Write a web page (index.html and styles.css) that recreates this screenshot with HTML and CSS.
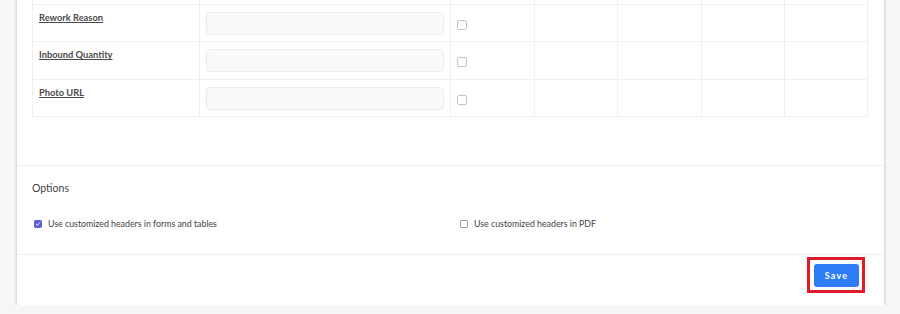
FILE: index.html
```html
<!DOCTYPE html>
<html>
<head>
<meta charset="utf-8">
<link rel="stylesheet" href="styles.css">
</head>
<body>
<div class="card">
  <div class="table-wrap">
    <table class="fields">
      <colgroup>
        <col class="c-name"><col class="c-input"><col class="c-check">
        <col class="c-rest"><col class="c-rest"><col class="c-rest"><col class="c-rest">
      </colgroup>
      <tr class="row prev">
        <td></td><td></td><td></td><td></td><td></td><td></td><td></td>
      </tr>
      <tr class="row">
        <td><a class="fname">Rework Reason</a></td>
        <td><div class="inp"></div></td>
        <td><span class="cb"></span></td>
        <td></td><td></td><td></td><td></td>
      </tr>
      <tr class="row">
        <td><a class="fname">Inbound Quantity</a></td>
        <td><div class="inp"></div></td>
        <td><span class="cb"></span></td>
        <td></td><td></td><td></td><td></td>
      </tr>
      <tr class="row">
        <td><a class="fname">Photo URL</a></td>
        <td><div class="inp"></div></td>
        <td><span class="cb"></span></td>
        <td></td><td></td><td></td><td></td>
      </tr>
    </table>
  </div>
  <div class="options">
    <div class="opt-title">Options</div>
    <div class="opt-row">
      <label class="opt">
        <span class="ocb checked"><svg viewBox="0 0 8 8" width="8" height="8"><path d="M1.6 4.2 L3.3 5.8 L6.4 2.3" fill="none" stroke="#fff" stroke-width="1.2" stroke-linecap="round" stroke-linejoin="round"/></svg></span>
        <span>Use customized headers in forms and tables</span>
      </label>
      <label class="opt">
        <span class="ocb"></span>
        <span>Use customized headers in PDF</span>
      </label>
    </div>
  </div>
  <div class="footer">
    <div class="highlight"><button class="save">Save</button></div>
  </div>
</div>
</body>
</html>
```

FILE: styles.css
```css
html, body {
  margin: 0;
  padding: 0;
  background: #f6f6f6;
  font-family: Lato, "Liberation Sans", sans-serif;
  color: #333;
}
.card {
  margin: -34px 16px 0 17px;
  background: #fff;
  box-shadow: 0 1px 3px rgba(0,0,0,0.28);
}
.table-wrap {
  padding: 0 16px 48px 15px;
}
.fields {
  width: 100%;
  border-collapse: collapse;
  table-layout: fixed;
}
.c-name { width: 167px; }
.c-input { width: 251px; }
.c-check { width: 84px; }
.fields td {
  border: 1px solid #f0f0f0;
  height: 37.6px;
  box-sizing: border-box;
  vertical-align: top;
  padding: 7px 6px 0 6px;
}
.fname {
  font-size: 9.3px;
  font-weight: 700;
  color: #4a4a4a;
  text-decoration: underline;
  display: block;
  line-height: 12px;
}
.inp {
  height: 23px;
  box-sizing: border-box;
  border: 1px solid #ececec;
  border-radius: 4px;
  background: #f9f9f9;
}
.cb {
  display: block;
  margin-top: 8px;
  width: 10px;
  height: 10px;
  box-sizing: border-box;
  border: 1px solid #c4c4c4;
  border-radius: 2px;
  background: #fff;
}
.options {
  border-top: 1px solid #eeeeee;
  padding: 15px 15px 0 15px;
  height: 89px;
  box-sizing: border-box;
}
.opt-title {
  font-size: 10.5px;
  color: #444;
  line-height: 14px;
}
.opt-row {
  display: grid;
  grid-template-columns: 426px 1fr;
  margin-top: 23px;
  padding-left: 2px;
}
.opt {
  display: flex;
  align-items: center;
  gap: 6px;
  font-size: 8.8px;
  color: #444;
  line-height: 12px;
}
.ocb {
  width: 8px;
  height: 8px;
  box-sizing: border-box;
  border: 1px solid #999;
  border-radius: 1.5px;
  display: flex;
  align-items: center;
  justify-content: center;
  background: #fff;
}
.ocb.checked {
  background: #5a5fd8;
  border-color: #5a5fd8;
}
.ocb svg { display: block; }
.footer {
  border-top: 1px solid #eeeeee;
  height: 51px;
  box-sizing: border-box;
  display: flex;
  justify-content: flex-end;
  align-items: flex-start;
  padding: 2px 19px 0 0;
}
.highlight {
  border: 3px solid #e01b2b;
  padding: 4px 3px 3px 4px;
}
.save {
  display: block;
  width: 45px;
  height: 23px;
  border: none;
  border-radius: 3px;
  background: #2f7df6;
  color: #fff;
  font-family: Lato, "Liberation Sans", sans-serif;
  font-weight: 700;
  font-size: 9px;
  letter-spacing: 1.2px;
  padding: 0;
}
```
